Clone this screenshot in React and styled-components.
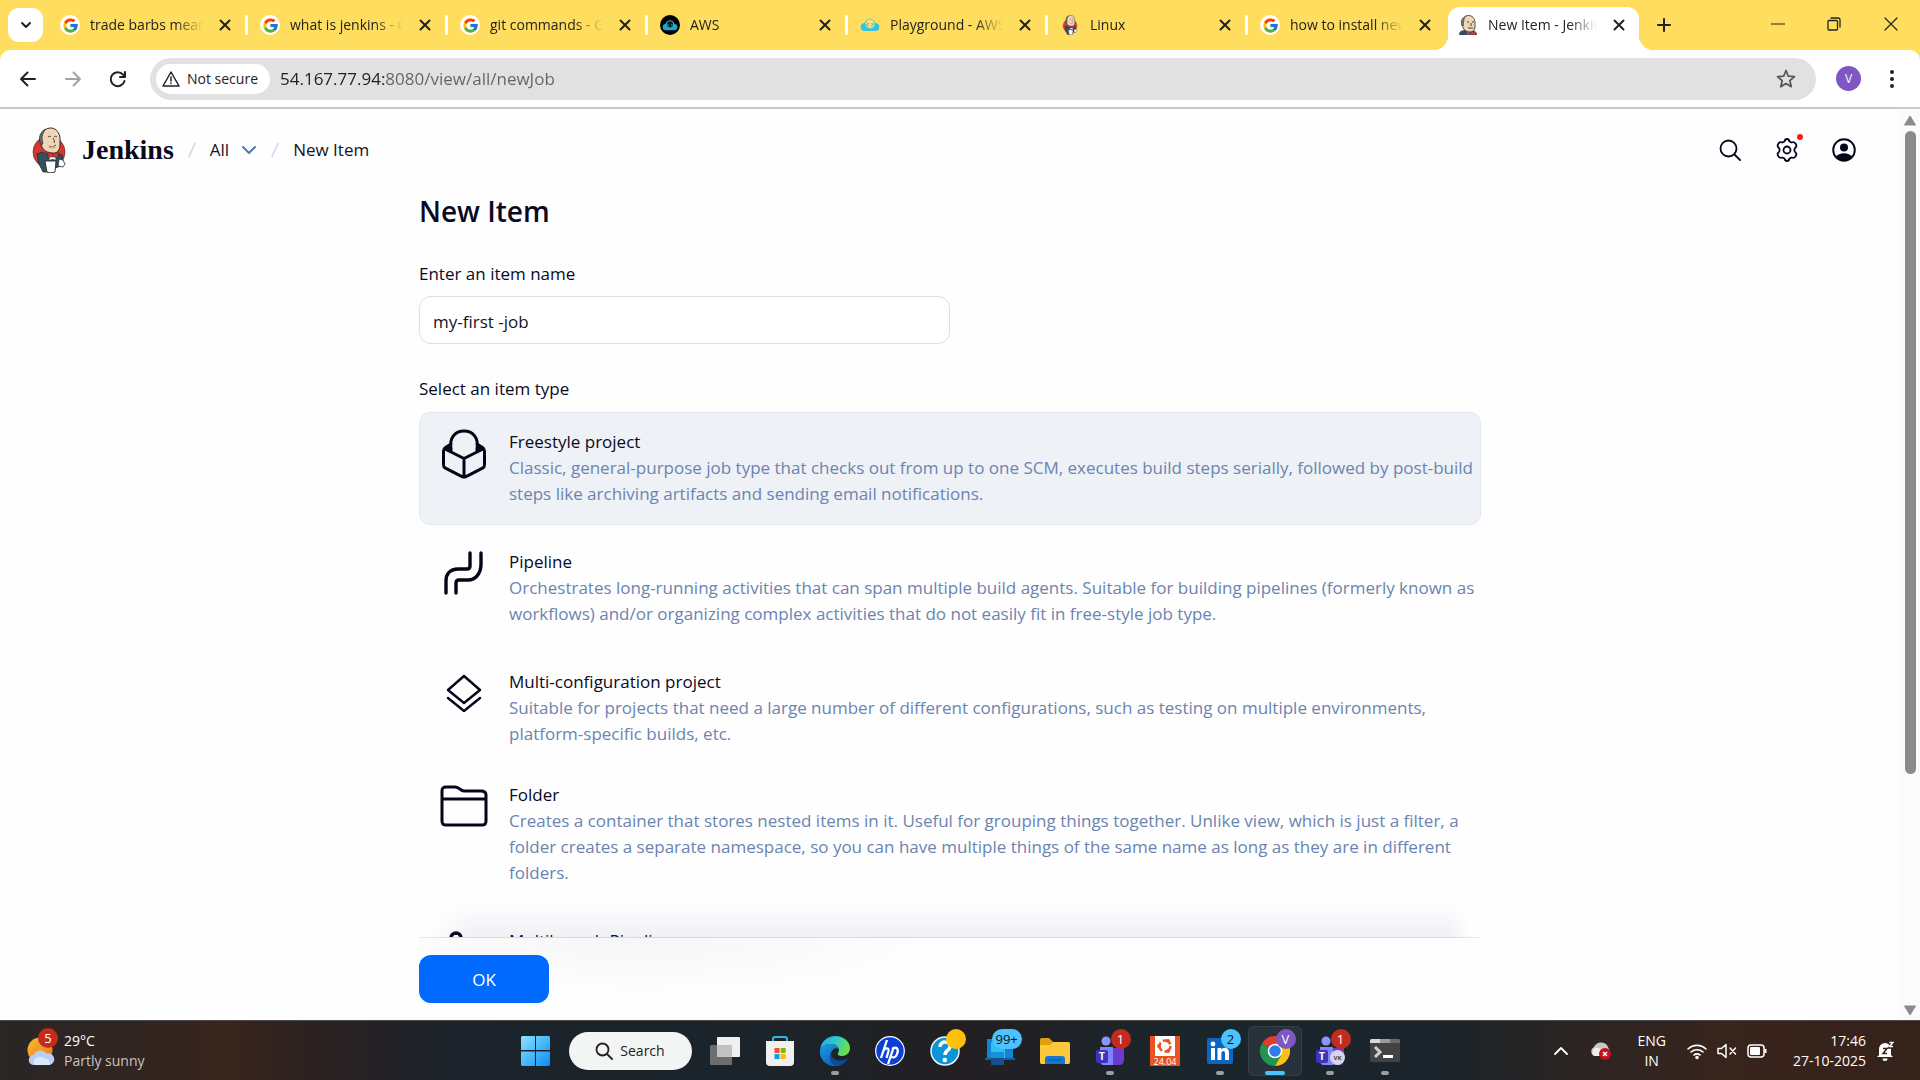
import React, { useState } from "react";
import styled, { createGlobalStyle, css } from "styled-components";
import { FcGoogle } from "react-icons/fc";

const GlobalStyle = createGlobalStyle`
  *, *::before, *::after { box-sizing: border-box; }
  html, body, #root { height: 100%; margin: 0; }
  body { font-family: "Open Sans", "Noto Sans", sans-serif; font-size: 16px; color: #0a0a1e; overflow: hidden; }
  button { font: inherit; color: inherit; background: none; border: 0; padding: 0; cursor: pointer; }
  svg { display: block; flex: none; }
`;

/* ---------- window ---------- */
const Desktop = styled.div`
  display: flex;
  flex-direction: column;
  height: 100vh;
  background: #ffdd5e;
`;

const TabStrip = styled.header`
  display: flex;
  flex: none;
  height: 50px;
  padding-left: 8px;
`;

const TabSearch = styled.button`
  display: grid;
  place-items: center;
  flex: none;
  width: 35px;
  height: 34px;
  margin: 8px 5px 0 0;
  border-radius: 11px;
  background: #fff;
`;

const TabList = styled.nav`
  display: flex;
  flex: 0 1 auto;
  min-width: 0;
`;

const Tab = styled.div`
  position: relative;
  display: flex;
  align-items: center;
  gap: 10px;
  flex: 0 1 200px;
  width: 200px;
  min-width: 0;
  padding: 0 0 0 12px;
  ${(p) =>
    p.$active &&
    css`
      flex-basis: 191px;
      width: 191px;
      margin-top: 7px;
      padding: 0 10px;
      padding-bottom: 7px;
      border-radius: 12px 12px 0 0;
      background: #fff;
      &::before,
      &::after {
        content: "";
        position: absolute;
        bottom: 0;
        width: 14px;
        height: 14px;
      }
      &::before {
        left: -14px;
        background: radial-gradient(circle at 0 0, transparent 14px, #fff 14px);
      }
      &::after {
        right: -14px;
        background: radial-gradient(circle at 100% 0, transparent 14px, #fff 14px);
      }
    `}
`;

const Favicon = styled.span`
  display: grid;
  place-items: center;
  flex: none;
  width: 20px;
  height: 20px;
  border-radius: 50%;
  background: ${(p) => p.$bg || "transparent"};
`;

const TabTitle = styled.span`
  flex: 1;
  min-width: 0;
  overflow: hidden;
  white-space: nowrap;
  font-size: 14px;
  line-height: 20px;
  color: #222;
  mask-image: linear-gradient(90deg, #000 calc(100% - 30px), transparent calc(100% - 2px));
`;

const IconButton = styled.button`
  display: grid;
  place-items: center;
  flex: none;
  width: ${(p) => p.$w || 20}px;
  height: ${(p) => p.$h || 20}px;
`;

const TabDivider = styled.span`
  flex: none;
  width: 3px;
  height: 20px;
  border-radius: 2px;
  background: #fff;
  visibility: ${(p) => (p.$hidden ? "hidden" : "visible")};
`;

const WindowButtons = styled.div`
  display: flex;
  margin-left: auto;
`;

const Toolbar = styled.div`
  display: flex;
  align-items: center;
  flex: none;
  height: 59px;
  padding: 0 13px 0 8px;
  border-bottom: 2px solid #cacaca;
  border-radius: 10px 10px 0 0;
  background: #fff;
`;

const NavButtons = styled.div`
  display: flex;
  gap: 5px;
  margin-right: 12px;
`;

const Omnibox = styled.div`
  display: flex;
  align-items: center;
  flex: 1;
  height: 42px;
  padding: 0 17px 0 6px;
  border-radius: 21px;
  background: #e1e1e1;
`;

const SecurityChip = styled.button`
  display: flex;
  align-items: center;
  gap: 7px;
  height: 30px;
  padding: 0 12px 0 6px;
  border-radius: 15px;
  background: #fff;
  font-size: 14px;
  font-weight: 500;
  color: #222;
`;

const UrlInput = styled.input`
  flex: 1;
  min-width: 0;
  margin-left: 10px;
  padding: 0;
  border: 0;
  outline: 0;
  font: 17px/24px "Open Sans", "Noto Sans", sans-serif;
  color: #333;
  background: linear-gradient(90deg, #202020 105px, #636363 105px);
  background-clip: text;
  -webkit-text-fill-color: transparent;
`;

const ProfileButton = styled.button`
  width: 25px;
  height: 25px;
  margin: 0 16px 0 20px;
  border-radius: 50%;
  background: #7e57c2;
  color: #fff;
  font-size: 12px;
  line-height: 25px;
`;

/* ---------- page ---------- */
const PageFrame = styled.div`
  display: flex;
  flex: 1;
  min-height: 0;
  background: #fefefe;
`;

const Page = styled.div`
  display: flex;
  flex-direction: column;
  flex: 1;
  min-width: 0;
`;

const PageScrollbar = styled.div`
  display: flex;
  flex-direction: column;
  align-items: center;
  width: 20px;
  padding: 6px 0 4px;
  background: #fbfbfb;
`;

const ScrollTrack = styled.div`
  flex: 1;
  padding: 5px 0;
`;

const ScrollThumb = styled.div`
  width: 11px;
  height: 74%;
  border-radius: 6px;
  background: #8a8a8a;
`;

const JenkinsHeader = styled.header`
  display: flex;
  align-items: center;
  justify-content: space-between;
  flex: none;
  height: 82px;
  padding: 0 40px 0 32px;
`;

const Breadcrumbs = styled.nav`
  display: flex;
  align-items: center;
  font-size: 17px;
  line-height: 26px;
`;

const Brand = styled.a`
  display: flex;
  align-items: center;
  gap: 16px;
  color: #0a0a1e;
  text-decoration: none;
  font: bold 28px/40px "Liberation Serif", serif;
`;

const Crumb = styled.a`
  color: #14141f;
  text-decoration: none;
`;

const Slash = styled.svg`
  margin: 0 14px;
`;

const CrumbMenu = styled.button`
  margin-left: 12px;
`;

const HeaderActions = styled.div`
  display: flex;
  gap: 25px;
`;

const ActionButton = styled.button`
  position: relative;
  display: grid;
  place-items: center;
  width: 32px;
  height: 40px;
`;

const AlertDot = styled.span`
  position: absolute;
  top: 4px;
  right: 0;
  width: 6px;
  height: 6px;
  border-radius: 50%;
  background: #ff1a1a;
`;

const Form = styled.form`
  display: flex;
  flex-direction: column;
  flex: 1;
  min-height: 0;
  width: 100%;
  max-width: 1062px;
  margin: 0 auto;
`;

const FormBody = styled.div`
  flex: 1;
  min-height: 0;
  overflow: hidden;
`;

const Title = styled.h1`
  margin: 0 0 30px;
  font-size: 28px;
  line-height: 40px;
  font-weight: 600;
`;

const FieldLabel = styled.label`
  display: block;
  margin-bottom: 9px;
  font-size: 17px;
  line-height: 26px;
`;

const NameInput = styled.input`
  display: block;
  width: 50%;
  height: 48px;
  margin-bottom: 32px;
  padding: 2px 13px 0;
  border: 1px solid #d8dfea;
  border-radius: 12px;
  outline: 0;
  background: #fff;
  color: #14141f;
  font: 17px/26px "Open Sans", "Noto Sans", sans-serif;
`;

const ItemList = styled.fieldset`
  display: flex;
  flex-direction: column;
  gap: 7px;
  margin: 0;
  padding: 0;
  border: 0;
`;

const ItemLegend = styled.legend`
  margin-bottom: 10px;
  padding: 0;
  font-size: 17px;
  line-height: 26px;
`;

const ItemCard = styled.label`
  display: flex;
  gap: 20px;
  padding: ${(p) => (p.$tall ? 9 : 16)}px 2px 17px 19px;
  border: 1px solid ${(p) => (p.$selected ? "#e4e8ee" : "transparent")};
  border-radius: 11px;
  background: ${(p) => (p.$selected ? "#eef1f6" : "transparent")};
`;

const HiddenRadio = styled.input`
  appearance: none;
  width: 0;
  height: 0;
  margin: 0 -20px 0 0;
`;

const ItemIcon = styled.span`
  display: grid;
  place-items: center;
  flex: none;
  width: 50px;
  height: 48px;
`;

const ItemText = styled.span`
  display: block;
  font-size: 17px;
  line-height: 26px;
`;

const ItemName = styled.span`
  display: block;
`;

const ItemDescription = styled.span`
  display: block;
  color: #6b84b0;
`;

const StickyFooter = styled.div`
  position: relative;
  flex: none;
  padding: 17px 0;
  border-top: 1px solid #e3e6eb;
  background: radial-gradient(ellipse 320px 60px at 220px 0, #f6f6f8, #fefefe);
  &::before {
    content: "";
    position: absolute;
    left: 12px;
    right: 12px;
    bottom: 100%;
    height: 36px;
    background: linear-gradient(transparent, rgba(90, 105, 160, 0.09));
    mask-image: linear-gradient(90deg, transparent, #000 40px, #000 calc(100% - 20px), transparent);
  }
`;

const OkButton = styled.button`
  width: 130px;
  height: 48px;
  border-radius: 12px;
  background: #006aff;
  color: #fff;
  font-size: 17px;
`;

/* ---------- taskbar ---------- */
const Taskbar = styled.footer`
  display: grid;
  grid-template-columns: 1fr auto 1fr;
  align-items: center;
  flex: none;
  height: 60px;
  border-top: 1px solid #4a4b4b;
  background: linear-gradient(
    90deg,
    #292626 0%,
    #38241c 12%,
    #2b2122 17%,
    #1c232a 23%,
    #1b242a 40%,
    #231f22 50%,
    #1a262c 62%,
    #1b242a 75%,
    #2c2423 82%,
    #38241c 90%,
    #35221b 100%
  );
  color: #fff;
  font-size: 14px;
  line-height: 20px;
`;

const Weather = styled.button`
  display: flex;
  align-items: center;
  gap: 8px;
  justify-self: start;
  padding-left: 26px;
  text-align: left;
`;

const WeatherIcon = styled.span`
  position: relative;
  width: 30px;
  height: 40px;
  display: grid;
  place-items: center;
`;

const Muted = styled.span`
  display: block;
  color: #c9c4c2;
`;

const Apps = styled.nav`
  display: flex;
  align-items: center;
  gap: 1px;
`;

const AppButton = styled.button`
  position: relative;
  display: grid;
  place-items: center;
  width: 54px;
  height: 50px;
  ${(p) =>
    p.$active &&
    css`
      border-radius: 6px;
      background: #27323a;
      box-shadow: inset 0 0 0 1px #343f46;
    `}
`;

const Running = styled.span`
  position: absolute;
  bottom: 1px;
  left: 50%;
  width: ${(p) => (p.$active ? 20 : 8)}px;
  height: 4px;
  border-radius: 2px;
  background: ${(p) => (p.$active ? "#4cc2ff" : "#9b9fa1")};
  transform: translateX(-50%);
`;

const Badge = styled.span`
  position: absolute;
  top: 3px;
  left: ${(p) => (p.$wide ? 19 : 28)}px;
  min-width: 20px;
  height: 20px;
  padding: 0 ${(p) => (p.$wide ? 4 : 0)}px;
  border-radius: 10px;
  background: ${(p) => p.$bg};
  color: ${(p) => p.$fg || "#fff"};
  font-size: 13px;
  line-height: 20px;
  text-align: center;
`;

const WeatherBadge = styled(Badge)`
  top: -3px;
  left: 12px;
`;

const TaskSearch = styled.button`
  display: flex;
  align-items: center;
  justify-content: center;
  gap: 7px;
  width: 123px;
  height: 38px;
  margin: 0 5px;
  border-radius: 19px;
  background: #f3f4f4;
  color: #222;
`;

const Tray = styled.div`
  display: flex;
  align-items: center;
  justify-self: end;
  padding-right: 25px;
`;

const Language = styled.button`
  margin: 0 21px 0 10px;
  text-align: center;
`;

const Status = styled.button`
  display: flex;
  align-items: center;
  gap: 10px;
`;

const Clock = styled.button`
  margin: 0 11px 0 26px;
  text-align: right;
`;

/* ---------- drawings ---------- */
const Stroke = ({ size = 16, w = 2, color = "#222", box = 24, children }) => (
  <svg width={size} height={size} viewBox={`0 0 ${box} ${box}`} fill="none" stroke={color} strokeWidth={w} strokeLinecap="round" strokeLinejoin="round">
    {children}
  </svg>
);

const CloseIcon = () => (
  <Stroke size={12} box={12} w={2}>
    <path d="M1.5 1.5l9 9M10.5 1.5l-9 9" />
  </Stroke>
);

const Butler = ({ w = 34, h = 46 }) => (
  <svg width={w} height={h} viewBox="0 0 34 46">
    <ellipse cx="17" cy="25" rx="16" ry="16" fill="#d33833" stroke="#5b1a17" strokeWidth="0.6" />
    <path d="M5 27l5-2 7 3 7-2 6 2 1 6-2 5-6 2-2 4H11l-4-8z" fill="#335061" stroke="#1c2b36" strokeWidth="0.8" />
    <path d="M9 10C10 3 15 1 19 1c5 0 9 5 9 11v6c0 5-3 9-8 8-6 0-10-4-11-9z" fill="#f0d6b7" stroke="#2d2a28" strokeWidth="1" />
    <path d="M8 15C6 9 10 3 14 2c-3 3-4 6-4 10l1 5c-2 1-3 0-3-2z" fill="#6d6b6d" stroke="#2d2a28" strokeWidth="0.7" />
    <path d="M16 10c1-1 2-1 3 0M22 10c1-1 2-1 3 0M21 11c1 2 2 4 1 5M17 19c2 1 5 1 7-1" fill="none" stroke="#3a2c22" strokeWidth="0.9" />
    <path d="M16 20c3-1 5-1 8 0-2 2-6 2-8 0z" fill="#dcae86" />
    <path d="M16 25l5 2 5-2v6l-5-2-5 2z" fill="#d33833" stroke="#5b1a17" strokeWidth="0.6" />
    <path d="M18 30l5 0 1 3-3-1-4 1z" fill="#fff" stroke="#7a7a7a" strokeWidth="0.5" />
    <path d="M13 34h11l-1 11c-3 1-6 1-8 0z" fill="#fff" stroke="#2d2a28" strokeWidth="0.9" />
    <path d="M27 32l4 1 2 4-2 3-5-1z" fill="#fff" stroke="#2d2a28" strokeWidth="0.8" />
  </svg>
);

const ButlerHead = () => (
  <svg width="20" height="20" viewBox="0 0 20 20">
    <path d="M1 20c0-4 3-5 7-5h7c3 1 4 3 4 5z" fill="#335061" />
    <path d="M4 8c0-5 3-7.500 6.500-7.500S17 3 17 8v4c0 3-2 5-5 5-5 0-8-4-8-9z" fill="#f0d6b7" stroke="#2d2a28" strokeWidth="0.8" />
    <path d="M3 9C2 4 6 1 9 1 6 3 6 6 6 11 4 12 3 11 3 9z" fill="#6d6b6d" />
    <path d="M9 7h2M14 7h2M13 8v3M10 13h5" stroke="#3a2c22" strokeWidth="0.9" fill="none" />
    <path d="M9 16l4 2 4-2v4l-4-1-4 1z" fill="#d33833" />
  </svg>
);

const CloudMark = ({ dark }) => (
  <svg width={dark ? 16 : 20} height={dark ? 13 : 16} viewBox="0 0 20 16">
    <path d="M5 14a4 4 0 01-.6-8A6 6 0 0115.600 6 4 4 0 0115 14z" fill={dark ? "#0fa9d8" : "#35c3e0"} />
    <path d="M5.500 7a4.600 4.600 0 119 1 4.600 4.600 0 01-9-1z" fill={dark ? "#001a22" : "#ffe07a"} stroke="#5adbe0" strokeWidth="1" />
    <path d="M8.500 6L7 7.500 8.500 9M11.500 6L13 7.500 11.500 9" stroke={dark ? "#35c3e0" : "#1aa6c8"} fill="none" />
  </svg>
);

const FreestyleIcon = () => (
  <Stroke size={50} box={50} w={3} color="#05051a">
    <path d="M12 20C10 9 16 2 25 2s15 7 13 18" />
    <path d="M12 15L6.500 18.500Q4.500 20 4.500 22v14q0 2 2 3.200L23 47.600q2 1 4 0l16.500-8.400q2-1.200 2-3.200V22q0-2-2-3.500L38 15M6 20l19 9.500L44 20M25 29.500V48M11 17l-3 3 4 1.500M39 17l3 3-4 1.500" />
  </Stroke>
);

const PipelineIcon = () => (
  <Stroke size={44} box={44} w={3.4} color="#05051a">
    <path d="M28 2v13c0 2-1 3-3 3H16C8 18 4 23 4 30v12M39 2v11c0 9-5 16-13 16H17c-2 0-3 1-3 3v10" />
  </Stroke>
);

const LayersIcon = () => (
  <Stroke size={38} box={38} w={2.4} color="#05051a">
    <path d="M19 2l16 14-16 13L3 16zM3 24l16 13 16-13" />
  </Stroke>
);

const FolderIcon = () => (
  <svg width="50" height="46" viewBox="0 0 50 46" fill="none" stroke="#05051a" strokeWidth="3" strokeLinejoin="round">
    <path d="M3 8c0-3 1-4 4-4h9c5 0 5 4 9 4h17c3 0 5 1 5 4v26c0 3-1 4-4 4H7c-3 0-4-1-4-4zM3 16h44" />
  </svg>
);

const BranchIcon = () => (
  <Stroke size={44} box={44} w={3.4} color="#05051a">
    <circle cx="14" cy="8" r="5" />
    <circle cx="14" cy="36" r="5" />
    <circle cx="34" cy="18" r="5" />
    <path d="M14 13v18M34 23c0 7-8 8-20 8" />
  </Stroke>
);

const WindowsIcon = () => (
  <svg width="29" height="30" viewBox="0 0 29 30">
    <defs>
      <linearGradient id="win" x1="0" y1="0" x2="1" y2="1">
        <stop offset="0" stopColor="#8be4ff" />
        <stop offset="1" stopColor="#0a8cf5" />
      </linearGradient>
    </defs>
    <path d="M1 0h13v14H0V1zM15 0h13l1 1v13H15zM0 15.500h14V30H1l-1-1zM15 15.500h14V29l-1 1H15z" fill="url(#win)" />
  </svg>
);

const TaskViewIcon = () => (
  <svg width="30" height="30" viewBox="0 0 30 30">
    <rect x="0" y="9" width="22" height="20" rx="1" fill="#6b6d6e" />
    <rect x="7" y="1" width="23" height="20" rx="1" fill="#efefef" />
    <rect x="7" y="9" width="15" height="12" fill="#c2c2c2" />
  </svg>
);

const StoreIcon = () => (
  <svg width="30" height="30" viewBox="0 0 30 30">
    <path d="M8 6V3c0-1 .5-2 2-2h10c1.500 0 2 1 2 2v3" fill="none" stroke="#35b4ea" strokeWidth="2" />
    <path d="M1 5h28v21a4 4 0 01-4 4H5a4 4 0 01-4-4z" fill="#f0f0f0" />
    <path d="M9.500 12h5v5h-5z" fill="#f25022" />
    <path d="M15.700 12h5v5h-5z" fill="#7fba00" />
    <path d="M9.500 18h5v5h-5z" fill="#00a4ef" />
    <path d="M15.700 18h5v5h-5z" fill="#ffb900" />
  </svg>
);

const EdgeIcon = () => (
  <svg width="30" height="30" viewBox="0 0 30 30">
    <defs>
      <linearGradient id="edgeTop" x1="0" y1="0" x2="1" y2="0.4">
        <stop offset="0" stopColor="#1fa7e6" />
        <stop offset="0.5" stopColor="#2fc6d2" />
        <stop offset="1" stopColor="#67e04b" />
      </linearGradient>
      <linearGradient id="edgeLow" x1="0" y1="0" x2="0.8" y2="1">
        <stop offset="0" stopColor="#1b9de2" />
        <stop offset="1" stopColor="#0b57b0" />
      </linearGradient>
    </defs>
    <path d="M0 14C1 5 8 0 15 0c9 0 15 6 15 12 0 5-4 8-8 8-3 0-5-1-4-3 3-4-1-9-7-9C6 8 1 11 0 14z" fill="url(#edgeTop)" />
    <path d="M0 14c1-4 6-6 11-6 4 0 7 2 8 5-4-2-8 1-8 5 0 6 8 9 16 5-3 5-7 7-12 7C6 30-1 23 0 14z" fill="url(#edgeLow)" />
    <path d="M11 16c-1 7 6 11 16 7 1 0 1 0 0 1-3 4-7 6-11 6-5-2-8-8-5-14z" fill="#0f4a97" />
  </svg>
);

const HpIcon = () => (
  <svg width="30" height="30" viewBox="0 0 30 30">
    <circle cx="15" cy="15" r="14.300" fill="#0b3fd8" stroke="#fff" strokeWidth="1.200" />
    <path d="M12 4L6 22M8.500 15c1-3 6-4 5 0l-2 7M18.500 12L13 28M17 13c5-3 7 0 5 5-1 3-3 4-6 3" fill="none" stroke="#fff" strokeWidth="2.300" />
  </svg>
);

const HelpIcon = () => (
  <svg width="30" height="30" viewBox="0 0 30 30">
    <circle cx="15" cy="15" r="14" fill="#0a96d6" stroke="#e9f6fc" strokeWidth="1.500" />
    <path d="M10 11c0-7 11-6 10 0-1 4-5 3-5 8" fill="none" stroke="#fff" strokeWidth="3.500" />
    <circle cx="14.800" cy="24" r="2.300" fill="#fff" />
  </svg>
);

const MonitorIcon = () => (
  <svg width="30" height="30" viewBox="0 0 30 30">
    <rect x="2" y="3" width="26" height="19" fill="#1284d2" />
    <path d="M0 22h30v2H0z" fill="#0e5fa8" />
    <rect x="6" y="6" width="14" height="16" fill="#35bdf3" />
    <rect x="6" y="16" width="13" height="7" fill="#1592dd" />
    <rect x="6" y="22" width="13" height="7" fill="#154f8c" />
  </svg>
);

const ExplorerIcon = () => (
  <svg width="30" height="28" viewBox="0 0 30 28">
    <path d="M0 3c0-1.500.8-2 2-2h7l4 4h16v4H0z" fill="#dfa00e" />
    <path d="M0 8h10l3-3h15c1.500 0 2 .6 2 2v18c0 1.500-.7 2-2 2H2c-1.400 0-2-.5-2-2z" fill="#fdc93c" />
    <path d="M5 27v-5c0-2 1-3 3-3h14c2 0 3 1 3 3v5z" fill="#1478d0" />
    <path d="M8.500 23h13" stroke="#0b4f92" />
  </svg>
);

const TeamsIcon = ({ initials }) => (
  <svg width="30" height="30" viewBox="0 0 30 30">
    <circle cx="11" cy="5" r="4.500" fill="#8e93ff" />
    <path d="M15 12h14v12c0 3-2 5-5 5h-9z" fill="#6a3bd1" />
    <path d="M5 11h13v18H9c-3 0-4-2-4-5z" fill="#7f86fb" />
    <rect x="1" y="14" width="12" height="13" rx="2" fill="#3d36bd" />
    <text x="7" y="24" fontSize="10" fontWeight="700" fill="#fff" textAnchor="middle">T</text>
    {initials && <circle cx="22.500" cy="21.500" r="7.500" fill="#d9d4ea" />}
    {initials && <text x="22.500" y="24" fontSize="6" fontWeight="700" fill="#444" textAnchor="middle">{initials}</text>}
  </svg>
);

const UbuntuIcon = () => (
  <svg width="30" height="30" viewBox="0 0 30 30">
    <rect width="30" height="30" fill="#e95420" />
    <rect x="5" y="0" width="20" height="20" fill="#fff" />
    <circle cx="15" cy="10" r="5.500" fill="none" stroke="#e95420" strokeWidth="2.400" strokeDasharray="9 2.500" />
    <circle cx="9" cy="10" r="1.900" fill="#e95420" />
    <circle cx="18" cy="4.800" r="1.900" fill="#e95420" />
    <circle cx="18" cy="15.200" r="1.900" fill="#e95420" />
    <text x="15" y="29" fontSize="9" fill="#fff" textAnchor="middle">24.04</text>
  </svg>
);

const LinkedInIcon = () => (
  <svg width="26" height="26" viewBox="0 0 26 26">
    <rect width="26" height="26" rx="2" fill="#0a66c2" />
    <circle cx="6" cy="6" r="2.400" fill="#fff" />
    <path d="M4 10h4v12H4zM10.500 10h3.800v1.700C16 9 22 8.600 22 15v7h-4v-6.500c0-3.500-3.600-3-3.600 0V22h-3.900z" fill="#fff" />
  </svg>
);

const ChromeIcon = () => (
  <svg width="30" height="30" viewBox="0 0 30 30">
    <path d="M15 15L2 7.500A15 15 0 0128 7.500H15z" fill="#e33b2e" />
    <path d="M2 7.500A15 15 0 0015 30l6.500-11.300L15 15z" fill="#219653" />
    <path d="M28 7.500A15 15 0 0115 30l6.500-11.300L15 7.500z" fill="#fbc116" />
    <circle cx="15" cy="15" r="7.300" fill="#fff" />
    <circle cx="15" cy="15" r="5.800" fill="#2f7de9" />
  </svg>
);

const TerminalIcon = () => (
  <svg width="30" height="24" viewBox="0 0 30 24">
    <rect width="30" height="23" rx="1.500" fill="#434343" />
    <path d="M0 4V1.500Q0 0 1.500 0H10v4z" fill="#dadada" />
    <path d="M10 0h10v4H10z" fill="#9b9b9b" />
    <path d="M20 0h8.500Q30 0 30 1.500V4H20z" fill="#6a6a6a" />
    <path d="M5 8l5 5-5 5" fill="none" stroke="#cfcfcf" strokeWidth="3" />
    <path d="M13 17.500h10" stroke="#fff" strokeWidth="3" />
  </svg>
);

const SunCloud = () => (
  <svg width="30" height="30" viewBox="0 0 30 30">
    <defs>
      <linearGradient id="sun" x1="0" y1="0" x2="1" y2="1">
        <stop offset="0" stopColor="#f5c02c" />
        <stop offset="1" stopColor="#f0701c" />
      </linearGradient>
    </defs>
    <circle cx="14" cy="14" r="12.500" fill="url(#sun)" />
    <path d="M8 29a5 5 0 01-.5-10 7.500 7.500 0 0113-1.500A6 6 0 0124 29z" fill="#b7cff8" />
    <path d="M9 29a5 5 0 01-.5-6 8 8 0 0110-1 6 6 0 015.500 7z" fill="#dbe7fd" />
  </svg>
);

/* ---------- data ---------- */
const google = <FcGoogle size={17} />;
const tabs = [
  { title: "trade barbs meaning", bg: "#fff", icon: google },
  { title: "what is jenkins - Google", bg: "#fff", icon: google },
  { title: "git commands - Google", bg: "#fff", icon: google },
  { title: "AWS", bg: "#000", icon: <CloudMark dark /> },
  { title: "Playground - AWS", icon: <CloudMark /> },
  { title: "Linux", icon: <Butler w={16} h={20} /> },
  { title: "how to install new", bg: "#fff", icon: google },
  { title: "New Item - Jenkins", icon: <ButlerHead />, active: true },
];

const itemTypes = [
  {
    id: "freestyle",
    name: "Freestyle project",
    icon: <FreestyleIcon />,
    text: "Classic, general-purpose job type that checks out from up to one SCM, executes build steps serially, followed by post-build steps like archiving artifacts and sending email notifications.",
  },
  {
    id: "pipeline",
    name: "Pipeline",
    icon: <PipelineIcon />,
    text: "Orchestrates long-running activities that can span multiple build agents. Suitable for building pipelines (formerly known as workflows) and/or organizing complex activities that do not easily fit in free-style job type.",
  },
  {
    id: "matrix",
    name: "Multi-configuration project",
    icon: <LayersIcon />,
    text: "Suitable for projects that need a large number of different configurations, such as testing on multiple environments, platform-specific builds, etc.",
  },
  {
    id: "folder",
    name: "Folder",
    icon: <FolderIcon />,
    tall: true,
    text: "Creates a container that stores nested items in it. Useful for grouping things together. Unlike view, which is just a filter, a folder creates a separate namespace, so you can have multiple things of the same name as long as they are in different folders.",
  },
  {
    id: "multibranch",
    name: "Multibranch Pipeline",
    icon: <BranchIcon />,
    text: "Creates a set of Pipeline projects according to detected branches in one SCM repository.",
  },
];

const apps = [
  { label: "Task View", icon: <TaskViewIcon /> },
  { label: "Microsoft Store", icon: <StoreIcon /> },
  { label: "Edge", icon: <EdgeIcon />, running: true },
  { label: "HP", icon: <HpIcon /> },
  { label: "HP Support", icon: <HelpIcon />, badge: { text: "", bg: "#ffc107" } },
  { label: "Phone Link", icon: <MonitorIcon />, badge: { text: "99+", bg: "#4cc2ff", fg: "#111", wide: true } },
  { label: "File Explorer", icon: <ExplorerIcon /> },
  { label: "Teams", icon: <TeamsIcon />, running: true, badge: { text: "1", bg: "#c42b1c" } },
  { label: "Ubuntu", icon: <UbuntuIcon /> },
  { label: "LinkedIn", icon: <LinkedInIcon />, running: true, badge: { text: "2", bg: "#4cc2ff", fg: "#111" } },
  { label: "Chrome", icon: <ChromeIcon />, running: true, active: true, badge: { text: "V", bg: "#7e57c2" } },
  { label: "Teams work", icon: <TeamsIcon initials="VK" />, running: true, badge: { text: "1", bg: "#c42b1c" } },
  { label: "Terminal", icon: <TerminalIcon />, running: true },
];

function BrowserChrome() {
  return (
    <>
      <TabStrip>
        <TabSearch aria-label="Search tabs">
          <Stroke size={12} box={12} w={2}>
            <path d="M2 4l4 4 4-4" />
          </Stroke>
        </TabSearch>
        <TabList>
          {tabs.map((t, i) => (
            <Tab key={t.title} $active={t.active}>
              <Favicon $bg={t.bg}>{t.icon}</Favicon>
              <TabTitle>{t.title}</TabTitle>
              <IconButton aria-label="Close tab"><CloseIcon /></IconButton>
              {!t.active && <TabDivider $hidden={i === tabs.length - 2} />}
            </Tab>
          ))}
        </TabList>
        <IconButton $w={50} $h={50} aria-label="New tab">
          <Stroke size={14} box={14} w={2}><path d="M7 1v12M1 7h12" /></Stroke>
        </IconButton>
        <WindowButtons>
          <IconButton $w={56} $h={48} aria-label="Minimize">
            <Stroke size={14} box={14} w={1.2}><path d="M.5 7h13" /></Stroke>
          </IconButton>
          <IconButton $w={56} $h={48} aria-label="Restore">
            <Stroke size={14} box={14} w={1.3}><path d="M1 4.500Q1 3.500 2 3.500h7.500q1 0 1 1V12q0 1-1 1H2q-1 0-1-1zM4 1h7q2 0 2 2v7" /></Stroke>
          </IconButton>
          <IconButton $w={58} $h={48} aria-label="Close">
            <Stroke size={14} box={14} w={1.2}><path d="M1 1l12 12M13 1L1 13" /></Stroke>
          </IconButton>
        </WindowButtons>
      </TabStrip>
      <Toolbar>
        <NavButtons>
          <IconButton $w={40} $h={40} aria-label="Back">
            <Stroke size={18} box={18} w={2}><path d="M16 9H2M8.500 2.500L2 9l6.500 6.500" /></Stroke>
          </IconButton>
          <IconButton $w={40} $h={40} aria-label="Forward">
            <Stroke size={18} box={18} w={2} color="#a3a3a3"><path d="M2 9h14M9.500 2.500L16 9l-6.500 6.500" /></Stroke>
          </IconButton>
          <IconButton $w={40} $h={40} aria-label="Reload">
            <Stroke size={18} box={18} w={2}><path d="M15.500 11A7 7 0 1114 4.500L16 7M16 2v5h-5" /></Stroke>
          </IconButton>
        </NavButtons>
        <Omnibox>
          <SecurityChip>
            <Stroke size={18} box={18} w={1.5}><path d="M9 2l8 14H1zM9 7v4M9 13v.5" /></Stroke>
            Not secure
          </SecurityChip>
          <UrlInput aria-label="Address" defaultValue="54.167.77.94:8080/view/all/newJob" />
          <IconButton $w={26} $h={26} aria-label="Bookmark this page">
            <Stroke size={20} box={20} w={1.7} color="#555"><path d="M10 1.500l2.300 5.700 6.200.5-4.700 4 1.500 6-5.300-3.200-5.300 3.200 1.500-6-4.700-4 6.200-.5z" /></Stroke>
          </IconButton>
        </Omnibox>
        <ProfileButton aria-label="Profile">V</ProfileButton>
        <IconButton $w={30} $h={30} aria-label="Menu">
          <svg width="4" height="18" viewBox="0 0 4 18" fill="#222">
            <circle cx="2" cy="2" r="2" /><circle cx="2" cy="9" r="2" /><circle cx="2" cy="16" r="2" />
          </svg>
        </IconButton>
      </Toolbar>
    </>
  );
}

const CrumbSlash = () => (
  <Slash width="8" height="18" viewBox="0 0 9 18" stroke="#cfd9ea" strokeWidth="1.800">
    <path d="M8 1L1 17" />
  </Slash>
);

function NewItemPage() {
  const [selected, setSelected] = useState("freestyle");
  return (
    <Page>
      <JenkinsHeader>
        <Breadcrumbs>
          <Brand href="#home"><Butler />Jenkins</Brand>
          <CrumbSlash />
          <Crumb href="#all">All</Crumb>
          <CrumbMenu aria-label="All menu">
            <Stroke size={16} box={16} w={2} color="#4f78b4"><path d="M2 5l6 6 6-6" /></Stroke>
          </CrumbMenu>
          <CrumbSlash />
          <Crumb href="#new">New Item</Crumb>
        </Breadcrumbs>
        <HeaderActions>
          <ActionButton aria-label="Search">
            <Stroke size={22} box={22} w={1.8} color="#05051a"><circle cx="9.500" cy="9.500" r="8" /><path d="M15.500 15.500l5.500 5.500" /></Stroke>
          </ActionButton>
          <ActionButton aria-label="Manage Jenkins">
            <Stroke size={24} box={24} w={1.8} color="#05051a">
              <path d="M9.500 3.500Q10 1 12 1t2.500 2.500q1 .5 2 1Q19 3.500 20.500 5.500T21 9q-1 .8-1.500 2v2q.5 1.200 1.500 2 1 1.500-.5 3.500t-4 1q-1 .5-2 1Q14 23 12 23t-2.500-2.500q-1-.5-2-1-2.500 1-4-1T3 15q1-.8 1.500-2v-2Q4 9.800 3 9q-1-1.500.5-3.500t4-1q1-.5 2-1z" />
              <circle cx="12" cy="12" r="3.500" />
            </Stroke>
            <AlertDot />
          </ActionButton>
          <ActionButton aria-label="Account">
            <svg width="24" height="24" viewBox="0 0 24 24">
              <circle cx="12" cy="12" r="10.800" fill="none" stroke="#05051a" strokeWidth="1.900" />
              <circle cx="12" cy="9.500" r="4" fill="#05051a" />
              <path d="M4 19c3-5 13-5 16 0-4 5-12 5-16 0z" fill="#05051a" />
            </svg>
          </ActionButton>
        </HeaderActions>
      </JenkinsHeader>
      <Form onSubmit={(e) => e.preventDefault()}>
        <FormBody>
          <Title>New Item</Title>
          <FieldLabel htmlFor="name">Enter an item name</FieldLabel>
          <NameInput id="name" defaultValue="my-first -job" />
          <ItemList>
            <ItemLegend>Select an item type</ItemLegend>
            {itemTypes.map((it) => (
              <ItemCard key={it.id} $selected={selected === it.id} $tall={it.tall}>
                <HiddenRadio type="radio" name="mode" checked={selected === it.id} onChange={() => setSelected(it.id)} />
                <ItemIcon>{it.icon}</ItemIcon>
                <ItemText>
                  <ItemName>{it.name}</ItemName>
                  <ItemDescription>{it.text}</ItemDescription>
                </ItemText>
              </ItemCard>
            ))}
          </ItemList>
        </FormBody>
        <StickyFooter>
          <OkButton type="submit">OK</OkButton>
        </StickyFooter>
      </Form>
    </Page>
  );
}

function SystemTaskbar() {
  return (
    <Taskbar>
      <Weather>
        <WeatherIcon>
          <SunCloud />
          <WeatherBadge $bg="#c42b1c">5</WeatherBadge>
        </WeatherIcon>
        <span>29°C<Muted>Partly sunny</Muted></span>
      </Weather>
      <Apps>
        <AppButton aria-label="Start"><WindowsIcon /></AppButton>
        <TaskSearch>
          <Stroke size={18} box={18} w={1.8}><circle cx="7.500" cy="7.500" r="6" /><path d="M12 12l5 5" /></Stroke>
          Search
        </TaskSearch>
        {apps.map((a) => (
          <AppButton key={a.label} aria-label={a.label} $active={a.active}>
            {a.icon}
            {a.badge && <Badge $bg={a.badge.bg} $fg={a.badge.fg} $wide={a.badge.wide}>{a.badge.text}</Badge>}
            {a.running && <Running $active={a.active} />}
          </AppButton>
        ))}
      </Apps>
      <Tray>
        <IconButton $w={28} $h={28} aria-label="Show hidden icons">
          <Stroke size={14} box={14} w={1.8} color="#fff"><path d="M1 10l6-6 6 6" /></Stroke>
        </IconButton>
        <IconButton $w={52} $h={28} aria-label="OneDrive">
          <svg width="22" height="20" viewBox="0 0 22 20">
            <path d="M4 15a5 5 0 010-9A8 8 0 0117 4l3 6-4 5z" fill="#c9c7c5" />
            <path d="M4 15a5 5 0 011-8c4-1 8 2 8 8z" fill="#efeeed" />
            <circle cx="15" cy="13" r="6" fill="#c50f1f" />
            <path d="M13 11l4 4M17 11l-4 4" stroke="#fff" strokeWidth="1.500" />
          </svg>
        </IconButton>
        <Language>ENG<br />IN</Language>
        <Status aria-label="Network, sound and battery">
          <Stroke size={20} box={20} w={1.6} color="#fff">
            <path d="M1 8a13 13 0 0118 0M4 11a9 9 0 0112 0M7 14a5 5 0 016 0" /><circle cx="10" cy="16.500" r="1" fill="#fff" />
          </Stroke>
          <Stroke size={20} box={20} w={1.5} color="#fff">
            <path d="M1 7.500h3.500L9 3.500v13l-4.500-4H1zM13 7l5.500 6M18.500 7L13 13" />
          </Stroke>
          <svg width="20" height="14" viewBox="0 0 20 14">
            <rect x="1" y="1" width="16" height="12" rx="3" fill="none" stroke="#fff" strokeWidth="1.500" />
            <rect x="3" y="3" width="10" height="8" rx="1" fill="#fff" />
            <path d="M18.500 5v4" stroke="#fff" strokeWidth="2" />
          </svg>
        </Status>
        <Clock>17:46<br />27-10-2025</Clock>
        <IconButton $w={18} $h={22} aria-label="Notifications">
          <svg width="18" height="20" viewBox="0 0 18 20">
            <path d="M2 14V8a6 6 0 0112 0v6l2 2H0z" fill="#fff" />
            <path d="M5.500 17.500h5a2.500 2.500 0 01-5 0z" fill="#fff" />
            <path d="M12.500 1.500H17l-4.500 5H17" fill="none" stroke="#35221b" strokeWidth="2.600" />
            <path d="M6 7.500h4l-4 5h4" fill="none" stroke="#35221b" strokeWidth="1.500" />
            <path d="M12.500 1.500H16l-3.500 4H16" fill="none" stroke="#fff" strokeWidth="1.300" />
          </svg>
        </IconButton>
      </Tray>
    </Taskbar>
  );
}

export default function App() {
  return (
    <Desktop>
      <GlobalStyle />
      <BrowserChrome />
      <PageFrame>
        <NewItemPage />
        <PageScrollbar>
          <svg width="12" height="11" viewBox="0 0 12 11"><path d="M6 1l5.500 9H.5z" fill="#8a8a8a" stroke="#8a8a8a" strokeLinejoin="round" /></svg>
          <ScrollTrack><ScrollThumb /></ScrollTrack>
          <svg width="12" height="11" viewBox="0 0 12 11"><path d="M6 10L.5 1h11z" fill="#8a8a8a" stroke="#8a8a8a" strokeLinejoin="round" /></svg>
        </PageScrollbar>
      </PageFrame>
      <SystemTaskbar />
    </Desktop>
  );
}
